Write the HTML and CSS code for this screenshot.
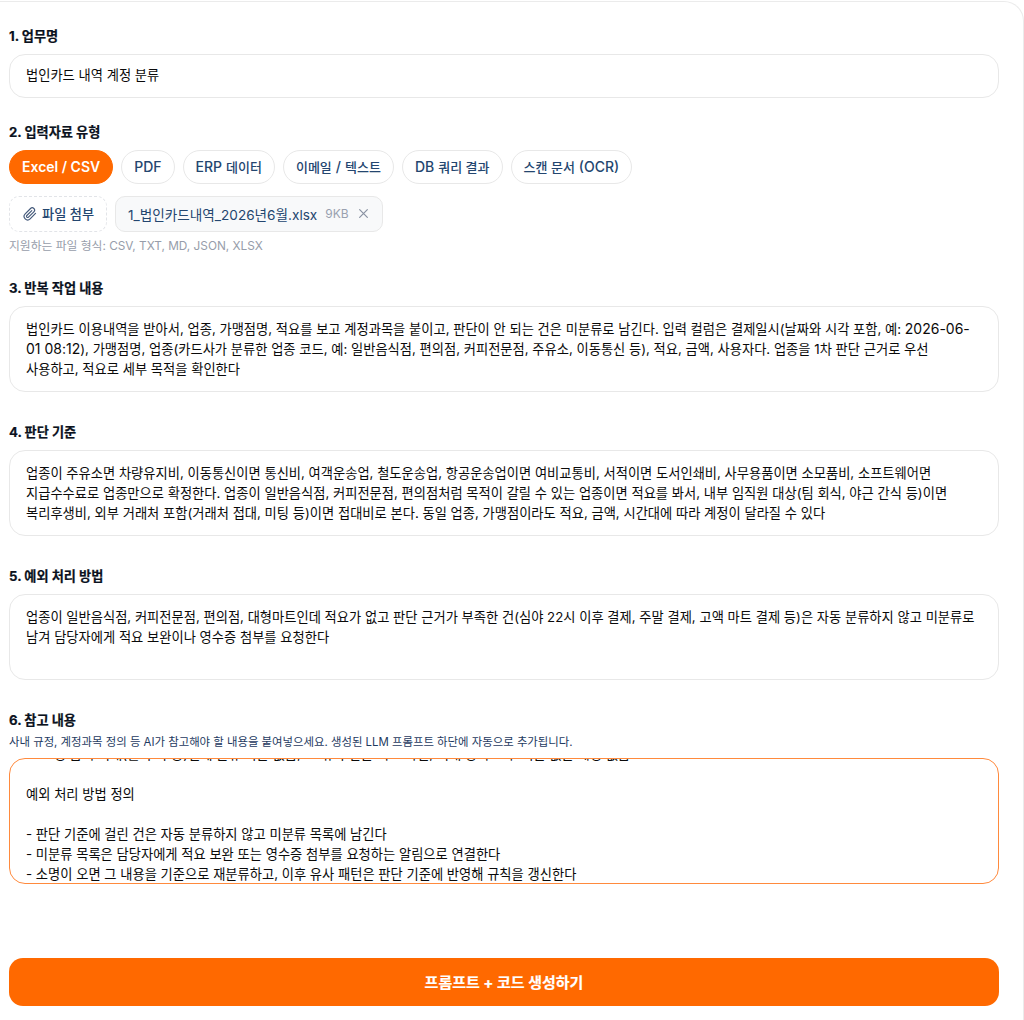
FILE: index.html
```html
<!DOCTYPE html>
<html lang="ko">
<head>
<meta charset="utf-8">
<title>업무 자동화</title>
<link rel="stylesheet" href="styles.css">
</head>
<body>
<main class="card">
  <section class="field first">
    <h2 class="label">1. 업무명</h2>
    <div class="box single">법인카드 내역 계정 분류</div>
  </section>
  <section class="field">
    <h2 class="label">2. 입력자료 유형</h2>
    <div class="chips">
      <span class="chip active">Excel / CSV</span>
      <span class="chip">PDF</span>
      <span class="chip">ERP <span class="ko">데이터</span></span>
      <span class="chip"><span class="ko">이메일</span> / <span class="ko">텍스트</span></span>
      <span class="chip">DB <span class="ko">쿼리 결과</span></span>
      <span class="chip"><span class="ko">스캔 문서</span> (OCR)</span>
    </div>
    <div class="files">
      <span class="attach">
        <svg class="clip" viewBox="0 0 24 24" width="14" height="14" fill="none" stroke="currentColor" stroke-width="2" stroke-linecap="round" stroke-linejoin="round"><path d="M21.44 11.05l-9.19 9.19a6 6 0 0 1-8.49-8.49l9.19-9.19a4 4 0 0 1 5.66 5.66l-9.2 9.19a2 2 0 0 1-2.83-2.83l8.49-8.48"/></svg>
        파일 첨부
      </span>
      <span class="file">
        <span class="file-name">1_법인카드내역_2026년6월.xlsx</span>
        <span class="file-size">9KB</span>
        <svg class="file-x" viewBox="0 0 10 10" width="11" height="11" fill="none" stroke="currentColor" stroke-width="1.1" stroke-linecap="round"><path d="M1.5 1.5l7 7M8.5 1.5l-7 7"/></svg>
      </span>
    </div>
    <p class="hint">지원하는 파일 형식: CSV, TXT, MD, JSON, XLSX</p>
  </section>
  <section class="field after-hint">
    <h2 class="label">3. 반복 작업 내용</h2>
    <div class="box area">법인카드 이용내역을 받아서, 업종, 가맹점명, 적요를 보고 계정과목을 붙이고, 판단이 안 되는 건은 미분류로 남긴다. 입력 컬럼은 결제일시(날짜와 시각 포함, 예: <span class="num">2026-06-</span><br><span class="num">01 08:12</span>), 가맹점명, 업종(카드사가 분류한 업종 코드, 예: 일반음식점, 편의점, 커피전문점, 주유소, 이동통신 등), 적요, 금액, 사용자다. 업종을 1차 판단 근거로 우선<br>사용하고, 적요로 세부 목적을 확인한다</div>
  </section>
  <section class="field after-area">
    <h2 class="label">4. 판단 기준</h2>
    <div class="box area">업종이 주유소면 차량유지비, 이동통신이면 통신비, 여객운송업, 철도운송업, 항공운송업이면 여비교통비, 서적이면 도서인쇄비, 사무용품이면 소모품비, 소프트웨어면<br>지급수수료로 업종만으로 확정한다. 업종이 일반음식점, 커피전문점, 편의점처럼 목적이 갈릴 수 있는 업종이면 적요를 봐서, 내부 임직원 대상(팀 회식, 야근 간식 등)이면<br>복리후생비, 외부 거래처 포함(거래처 접대, 미팅 등)이면 접대비로 본다. 동일 업종, 가맹점이라도 적요, 금액, 시간대에 따라 계정이 달라질 수 있다</div>
  </section>
  <section class="field after-area">
    <h2 class="label">5. 예외 처리 방법</h2>
    <div class="box area">업종이 일반음식점, 커피전문점, 편의점, 대형마트인데 적요가 없고 판단 근거가 부족한 건(심야 22시 이후 결제, 주말 결제, 고액 마트 결제 등)은 자동 분류하지 않고 미분류로<br>남겨 담당자에게 적요 보완이나 영수증 첨부를 요청한다</div>
  </section>
  <section class="field after-area">
    <h2 class="label tight">6. 참고 내용</h2>
    <p class="desc">사내 규정, 계정과목 정의 등 AI가 참고해야 할 내용을 붙여넣으세요. 생성된 LLM 프롬프트 하단에 자동으로 추가됩니다.</p>
    <div class="box scroll">
      <p class="line">3. 고정 금액 거래(월 구독 등)인데 분류 기준 없음, 그 밖의 건은 적요 확인, 거래 양쪽 모두 기준 없는 계정 없음</p>
      <p class="line">&nbsp;</p>
      <p class="line">예외 처리 방법 정의</p>
      <p class="line">&nbsp;</p>
      <p class="line">- 판단 기준에 걸린 건은 자동 분류하지 않고 미분류 목록에 남긴다</p>
      <p class="line">- 미분류 목록은 담당자에게 적요 보완 또는 영수증 첨부를 요청하는 알림으로 연결한다</p>
      <p class="line">- 소명이 오면 그 내용을 기준으로 재분류하고, 이후 유사 패턴은 판단 기준에 반영해 규칙을 갱신한다</p>
    </div>
  </section>
  <button class="submit" type="button">프롬프트 + 코드 생성하기</button>
</main>
</body>
</html>
```
FILE: styles.css
```css
* { box-sizing: border-box; }
html, body { margin: 0; background: #fff; }
body {
  font-family: Inter, "Noto Sans CJK KR", "Noto Sans", sans-serif;
  color: #0a0a0a;
  height: 1020px;
  overflow: hidden;
}
.card {
  width: 1024px;
  height: 1019px;
  margin-top: 1px;
  padding: 0 24px 0 9px;
  border-top: 1px solid #ebebeb;
  border-right: 1px solid #ebebeb;
  border-top-right-radius: 20px;
  display: flex;
  flex-direction: column;
}
.field { margin-top: 24px; }
.field.first { margin-top: 24px; }
.field.after-hint { margin-top: 24px; }
.field.after-area { margin-top: 30px; }
.label {
  margin: 0 0 9px;
  padding-top: 1px;
  font-size: 13.2px;
  line-height: 18px;
  font-weight: 700;
  color: #0b1220;
  -webkit-text-stroke: 0.2px #0b1220;
}
.label.tight { margin-bottom: 6px; }
.box {
  border: 1px solid #e8e8e8;
  border-radius: 16px;
  background: #fff;
  font-size: 13.28px;
  line-height: 20px;
  color: #0a0a0a;
  padding: 12px 16px;
  white-space: nowrap;
}
.single { height: 44px; padding-top: 10px; }
.area { height: 86px; white-space: normal; }
.num { font-size: 14px; }
.chips { display: flex; gap: 8px; }
.chip {
  height: 34px;
  padding: 0 12px 1px;
  display: flex;
  align-items: center;
  gap: 4px;
  border: 1px solid #e8e8e8;
  border-radius: 17px;
  font-size: 14px;
  font-weight: 500;
  color: #24466f;
  background: #fff;
}
.ko { font-size: 13px; }
.chip.active {
  background: #ff6900;
  border-color: #ff6900;
  color: #fff;
  font-weight: 600;
}
.files { display: flex; gap: 8px; margin-top: 12px; }
.attach {
  height: 36px;
  padding: 0 12px 1px 13px;
  display: flex;
  align-items: center;
  gap: 5px;
  border: 1px dashed #e2e4e8;
  border-radius: 10px;
  font-size: 13.2px;
  font-weight: 500;
  color: #24466f;
}
.clip { color: #44597a; }
.file {
  height: 36px;
  padding: 0 13px 1px 12px;
  display: flex;
  align-items: center;
  border: 1px solid #e8e8e8;
  border-radius: 10px;
  background: #f8f9fa;
  font-size: 13.6px;
  color: #24466f;
}
.file-size { margin-left: 8px; font-size: 12px; color: #99a1af; }
.file-x { margin-left: 9px; color: #8a93a3; }
.hint { margin: 6px 0 0; font-size: 11.8px; line-height: 16px; color: #979daa; }
.desc { margin: 1px 0 9px; font-size: 11.4px; line-height: 14px; color: #1e3a5f; }
.scroll {
  height: 126px;
  padding: 0 16px;
  border-color: #ff8a3d;
  display: flex;
  flex-direction: column;
  justify-content: flex-end;
  overflow: hidden;
}
.line { margin: 0; flex: none; }
.line:last-child { margin-bottom: -1px; }
.submit {
  margin-top: 74px;
  height: 48px;
  padding: 0 0 2px;
  border: 0;
  border-radius: 14px;
  background: #ff6900;
  color: #fff;
  font-family: inherit;
  font-size: 15px;
  font-weight: 700;
  -webkit-text-stroke: 0.2px #fff;
}
```
